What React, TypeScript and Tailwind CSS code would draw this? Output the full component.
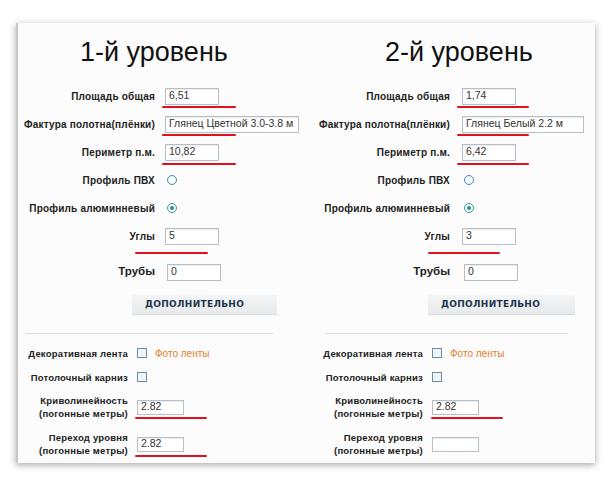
import React from "react";

type Col = {
  title: string;
  titleCls: string;
  labelCls: string;
  gapCls: string;
  bLabelCls: string;
  v: { area: string; tex: string; per: string; ugl: string; tr: string; kr: string; pe: string };
  texCls: string;
  topLineCls: string;
  uglLineCls: string;
  botLineCls: string;
  btnCls: string;
  sepCls: string;
  lastLine: boolean;
};

const LBL = "font-bold tracking-[0.2px] text-[#222] text-right whitespace-nowrap";

function Input({ v, cls }: { v: string; cls: string }) {
  return (
    <div
      className={
        "border border-[#b4bfca] bg-white text-[10.5px] text-[#333] pl-[3px] flex items-center whitespace-nowrap overflow-hidden shadow-[inset_0_1px_1px_rgba(0,0,0,0.08)] " +
        cls
      }
    >
      {v}
    </div>
  );
}

function Row({
  label,
  children,
  cls,
  labelCls,
  gapCls,
  line,
}: {
  label: React.ReactNode;
  children: React.ReactNode;
  cls: string;
  labelCls: string;
  gapCls: string;
  line?: string;
}) {
  return (
    <div className={"relative flex items-center " + cls}>
      <div className={labelCls}>{label}</div>
      <div className={gapCls}>{children}</div>
      {line && <div className={"absolute h-[2px] bg-[#e0101e] rounded-full " + line} />}
    </div>
  );
}

function Radio({ on }: { on: boolean }) {
  return (
    <div className="w-[10px] h-[10px] ml-[2px] rounded-full border border-[#4a8aa8] bg-[#f3fbff] flex items-center justify-center">
      {on && <div className="w-[4px] h-[4px] rounded-full bg-[#1f9a6a]" />}
    </div>
  );
}

function Box() {
  return <div className="w-[10px] h-[10px] border border-[#6f8fa0] bg-[#eef5f8]" />;
}

function Column({ c }: { c: Col }) {
  const lab = LBL + " text-[10px] " + c.labelCls;
  const blab = LBL + " text-[9.5px] leading-[13px] " + c.bLabelCls;
  return (
    <div className="flex flex-col font-['Liberation_Sans',Arial,sans-serif]">
      <div className={"h-[32px] mt-[13px] text-[27px] leading-[32px] text-[#111] whitespace-nowrap " + c.titleCls}>
        {c.title}
      </div>
      <Row label="Площадь общая" cls="h-[28px] mt-[14px]" labelCls={lab} gapCls={c.gapCls} line={"top-[24px] " + c.topLineCls}>
        <Input v={c.v.area} cls="w-[54px] h-[17px]" />
      </Row>
      <Row label="Фактура полотна(плёнки)" cls="h-[28px]" labelCls={lab} gapCls={c.gapCls} line={"top-[24px] " + c.topLineCls}>
        <Input v={c.v.tex} cls={"h-[17px] " + c.texCls} />
      </Row>
      <Row label="Периметр п.м." cls="h-[28px]" labelCls={lab} gapCls={c.gapCls} line={"top-[25px] " + c.topLineCls}>
        <Input v={c.v.per} cls="w-[54px] h-[17px]" />
      </Row>
      <Row label="Профиль ПВХ" cls="h-[28px]" labelCls={lab} gapCls={c.gapCls}>
        <Radio on={false} />
      </Row>
      <Row label="Профиль алюминневый" cls="h-[28px]" labelCls={lab} gapCls={c.gapCls}>
        <Radio on={true} />
      </Row>
      <Row label="Углы" cls="h-[28px]" labelCls={lab} gapCls={c.gapCls} line={"top-[30px] " + c.uglLineCls}>
        <Input v={c.v.ugl} cls="w-[54px] h-[17px]" />
      </Row>
      <Row
        label="Трубы"
        cls="h-[28px] mt-[8px]"
        labelCls={"font-semibold text-[11.5px] text-[#222] text-right whitespace-nowrap " + c.labelCls}
        gapCls={c.gapCls + " pl-[2px]"}
      >
        <Input v={c.v.tr} cls="w-[54px] h-[17px]" />
      </Row>
      <div
        className={
          "h-[20px] mt-[9px] bg-gradient-to-b from-[#f4f5f6] to-[#e7e9eb] border-b border-[#d8dbde] flex items-center pl-[13px] text-[9px] font-bold tracking-[0.3px] text-[#1d3550] font-['DejaVu_Sans',Verdana,sans-serif] " +
          c.btnCls
        }
      >
        ДОПОЛНИТЕЛЬНО
      </div>
      <div className={"h-px mt-[18px] bg-[#dcdcdc] " + c.sepCls} />
      <Row label="Декоративная лента" cls="h-[24px] mt-[7px]" labelCls={blab} gapCls="ml-[9px]">
        <div className="flex items-center gap-[8px]">
          <Box />
          <span className="text-[10px] text-[#e0802a] whitespace-nowrap">Фото ленты</span>
        </div>
      </Row>
      <Row label="Потолочный карниз" cls="h-[24px]" labelCls={blab} gapCls="ml-[9px]">
        <Box />
      </Row>
      <Row
        label={
          <>
            Криволинейность
            <br />
            (погонные метры)
          </>
        }
        cls="h-[30px] mt-[3px]"
        labelCls={blab}
        gapCls="ml-[9px]"
        line={"top-[25px] " + c.botLineCls}
      >
        <Input v={c.v.kr} cls="w-[47px] h-[15px]" />
      </Row>
      <Row
        label={
          <>
            Переход уровня
            <br />
            (погонные метры)
          </>
        }
        cls="h-[30px] mt-[7px]"
        labelCls={blab}
        gapCls="ml-[9px]"
        line={c.lastLine ? "top-[26px] " + c.botLineCls : undefined}
      >
        <Input v={c.v.pe} cls="w-[47px] h-[15px]" />
      </Row>
    </div>
  );
}

const left: Col = {
  title: "1-й уровень",
  titleCls: "pl-[62px]",
  labelCls: "w-[137px]",
  gapCls: "ml-[10px]",
  bLabelCls: "w-[110px]",
  v: { area: "6,51", tex: "Глянец Цветной 3.0-3.8 м", per: "10,82", ugl: "5", tr: "0", kr: "2.82", pe: "2.82" },
  texCls: "w-[134px]",
  topLineCls: "left-[144px] w-[74px]",
  uglLineCls: "left-[117px] w-[73px]",
  botLineCls: "left-[117px] w-[72px]",
  btnCls: "ml-[114px] w-[145px]",
  sepCls: "ml-[7px] w-[248px]",
  lastLine: true,
};

const right: Col = {
  title: "2-й уровень",
  titleCls: "pl-[80px]",
  labelCls: "w-[145px]",
  gapCls: "ml-[12px]",
  bLabelCls: "w-[118px]",
  v: { area: "1,74", tex: "Глянец Белый 2.2 м", per: "6,42", ugl: "3", tr: "0", kr: "2.82", pe: "" },
  texCls: "w-[122px]",
  topLineCls: "left-[152px] w-[72px]",
  uglLineCls: "left-[123px] w-[72px]",
  botLineCls: "left-[126px] w-[72px]",
  btnCls: "ml-[123px] w-[147px]",
  sepCls: "ml-[20px] w-[243px]",
  lastLine: false,
};

export default function App() {
  return (
    <div className="w-[610px] h-[488px] bg-white pt-[23px] pl-[16px] overflow-hidden">
      <div className="w-[579px] h-[440px] bg-[#fcfcfc] border-l-2 border-[#c8c8c8] shadow-[0_2px_7px_rgba(0,0,0,0.35)] grid grid-cols-[287px_290px] overflow-hidden">
        <Column c={left} />
        <Column c={right} />
      </div>
    </div>
  );
}
